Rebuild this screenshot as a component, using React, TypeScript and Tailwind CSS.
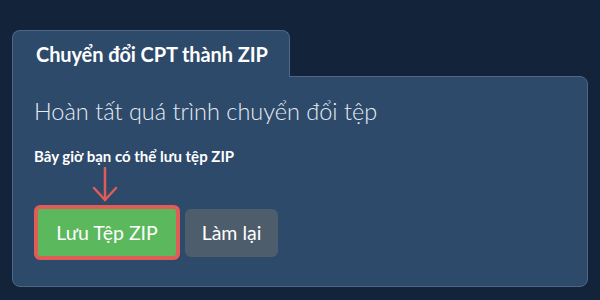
import React from 'react';

export default function App() {
  return (
    <div className="w-[600px] h-[300px] bg-[#12233a] pt-[30px] px-[12px] font-['Lato','Liberation_Sans',sans-serif] overflow-hidden">
      <div className="relative z-10 -mb-px w-[278px] h-[47px] bg-[#2d4a6b] border-l border-t border-r border-[#4c6788] rounded-t-lg flex items-center pl-[23px]">
        <span className="text-white font-bold text-[20px] tracking-[-0.1px]">Chuyển đổi CPT thành ZIP</span>
      </div>
      <div className="w-[576px] h-[211px] bg-[#2d4a6b] border border-[#4c6788] rounded-b-lg rounded-tr-lg pl-[21px] pt-[19px]">
        <h1 className="text-[#e6ebf1] font-light text-[23.5px] leading-[30px]">Hoàn tất quá trình chuyển đổi tệp</h1>
        <p className="mt-[21px] text-white font-bold text-[15px] leading-[18px]">Bây giờ bạn có thể lưu tệp ZIP</p>
        <div className="ml-[58px] mt-[2px] h-[36px] w-[26px]">
          <svg width="26" height="36" viewBox="0 0 26 36" fill="none" stroke="#e05c57" strokeWidth="2.5" strokeLinecap="round">
            <path d="M13 1V33" />
            <path d="M2 21L13 33L24 21" />
          </svg>
        </div>
        <div className="mt-[2px] flex items-center gap-[5px]">
          <button className="w-[146px] h-[55px] border-4 border-[#e05c57] rounded-md bg-[#5cb85c] text-white text-[19.5px] font-normal">
            Lưu Tệp ZIP
          </button>
          <button className="w-[93px] h-[48px] rounded-md bg-[#4e5d6c] text-white text-[19.5px] font-normal">
            Làm lại
          </button>
        </div>
      </div>
    </div>
  );
}
